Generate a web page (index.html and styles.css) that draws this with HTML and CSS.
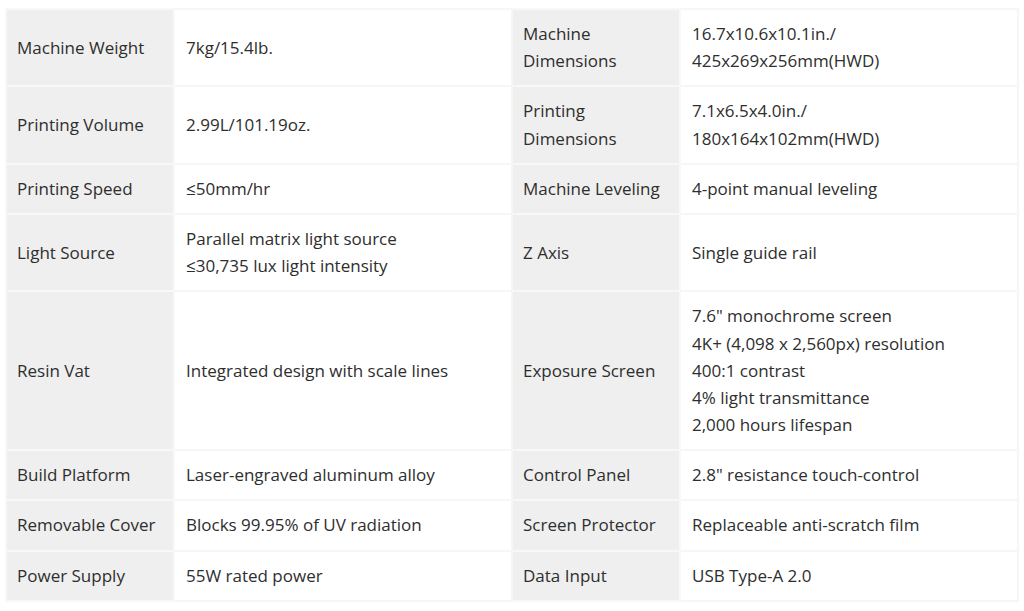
FILE: index.html
```html
<!DOCTYPE html>
<html>
<head>
<meta charset="utf-8">
<link rel="stylesheet" href="styles.css">
</head>
<body>
<div class="wrap">
<table class="specs">
<colgroup><col class="c-label"><col class="c-value"><col class="c-label"><col class="c-value"></colgroup>
<tbody>
<tr><td class="lbl">Machine Weight</td><td>7kg/15.4lb.</td><td class="lbl">Machine<br>Dimensions</td><td>16.7x10.6x10.1in./<br>425x269x256mm(HWD)</td></tr>
<tr><td class="lbl">Printing Volume</td><td>2.99L/101.19oz.</td><td class="lbl">Printing<br>Dimensions</td><td>7.1x6.5x4.0in./<br>180x164x102mm(HWD)</td></tr>
<tr><td class="lbl">Printing Speed</td><td>≤50mm/hr</td><td class="lbl">Machine Leveling</td><td>4-point manual leveling</td></tr>
<tr><td class="lbl">Light Source</td><td>Parallel matrix light source<br>≤30,735 lux light intensity</td><td class="lbl">Z Axis</td><td>Single guide rail</td></tr>
<tr><td class="lbl">Resin Vat</td><td>Integrated design with scale lines</td><td class="lbl">Exposure Screen</td><td>7.6" monochrome screen<br>4K+ (4,098 x 2,560px) resolution<br>400:1 contrast<br>4% light transmittance<br>2,000 hours lifespan</td></tr>
<tr><td class="lbl">Build Platform</td><td>Laser-engraved aluminum alloy</td><td class="lbl">Control Panel</td><td>2.8" resistance touch-control</td></tr>
<tr><td class="lbl">Removable Cover</td><td>Blocks 99.95% of UV radiation</td><td class="lbl">Screen Protector</td><td>Replaceable anti-scratch film</td></tr>
<tr><td class="lbl">Power Supply</td><td>55W rated power</td><td class="lbl">Data Input</td><td>USB Type-A 2.0</td></tr>
</tbody>
</table>
</div>
</body>
</html>
```
FILE: styles.css
```css
html, body {
  margin: 0;
  padding: 0;
  background: #ffffff;
}
.wrap {
  padding: 8px 5px 0 5px;
}
.specs {
  width: 1013px;
  border-collapse: collapse;
  table-layout: fixed;
  font-family: "Open Sans", "Liberation Sans", sans-serif;
  font-size: 17px;
  line-height: 1.6;
  color: #2e2e2e;
}
.c-label { width: 168px; }
.c-value { width: 338px; }
.specs td {
  border: 2px solid #f6f6f6;
  padding: 10px 10px 11px 11px;
  vertical-align: middle;
  background: #ffffff;
}
.specs td.lbl {
  background: #efefef;
  border-color: #f8f8f8;
  padding-left: 10px;
}
```
